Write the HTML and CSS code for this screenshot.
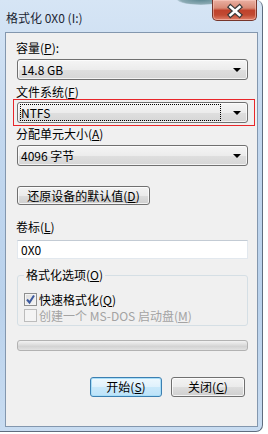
FILE: index.html
```html
<!DOCTYPE html>
<html lang="zh-CN">
<head>
    <meta charset="UTF-8">
    <title>格式化 0X0 (I:)</title>
    <link rel="stylesheet" href="styles.css">
</head>
<body>
    <div class="window">
        <div class="titlebar">
            <span class="title">格式化 0X0 (I:)</span>
            <div class="close-btn">
                <svg width="45" height="21" viewBox="0 0 45 21">
                    <path d="M18.5 7 L27.5 15 M27.5 7 L18.5 15" stroke="#3a3a3a" stroke-width="5" stroke-linecap="square" fill="none"/>
                    <path d="M18.5 7 L27.5 15 M27.5 7 L18.5 15" stroke="#ffffff" stroke-width="2.6" stroke-linecap="square" fill="none"/>
                </svg>
            </div>
        </div>
        <div class="client">
            <div class="label">容量(<u>P</u>):</div>
            <div class="combo">
                <span class="combo-text">14.8 GB</span>
                <span class="arrow"></span>
            </div>

            <div class="label">文件系统(<u>F</u>)</div>
            <div class="highlight">
                <div class="combo">
                    <span class="focus-box">NTFS</span>
                    <span class="arrow"></span>
                </div>
            </div>

            <div class="label label-tight">分配单元大小(<u>A</u>)</div>
            <div class="combo">
                <span class="combo-text">4096 字节</span>
                <span class="arrow"></span>
            </div>

            <div class="btn btn-reset">还原设备的默认值(<u>D</u>)</div>

            <div class="label label-volume">卷标(<u>L</u>)</div>
            <div class="textbox">0X0</div>

            <fieldset class="options">
                <legend>格式化选项(<u>O</u>)</legend>
                <div class="option">
                    <span class="checkbox checked">
                        <svg width="11" height="11" viewBox="0 0 11 11">
                            <path d="M2 5.5 L4.5 8.5 L9 1.5" stroke="#3d5a9e" stroke-width="2" fill="none"/>
                        </svg>
                    </span>
                    <span>快速格式化(<u>Q</u>)</span>
                </div>
                <div class="option disabled">
                    <span class="checkbox"></span>
                    <span>创建一个 MS-DOS 启动盘(<u>M</u>)</span>
                </div>
            </fieldset>

            <div class="progress"></div>

            <div class="actions">
                <div class="btn btn-default">开始(<u>S</u>)</div>
                <div class="btn btn-close">关闭(<u>C</u>)</div>
            </div>
        </div>
    </div>
</body>
</html>
```

FILE: styles.css
```css
body {
    margin: 0;
    background: #ffffff;
    font-family: "Noto Sans CJK SC", "Liberation Sans", sans-serif;
    font-size: 12px;
    color: #000000;
}
u {
    text-decoration-thickness: 1px;
    text-underline-offset: 1px;
}
.window {
    width: 263px;
    height: 432px;
    box-sizing: border-box;
    padding: 0 4px 4px 5px;
    background: linear-gradient(#d6e5f5, #c3d8ef 30%, #bad2ec 70%, #c8dcf1);
    border-right: 1px solid #5f6d7f;
    border-bottom: 1px solid #5f6d7f;
    border-radius: 0 7px 7px 0;
    display: flex;
    flex-direction: column;
}
.titlebar {
    position: relative;
    height: 32px;
    flex-shrink: 0;
    display: flex;
    justify-content: space-between;
    align-items: flex-start;
}
.titlebar::before {
    content: "";
    position: absolute;
    left: 172px;
    top: -6px;
    width: 48px;
    height: 11px;
    border-radius: 50%;
    background: radial-gradient(#3c6f78, #7a9ca4 60%, rgba(200, 220, 240, 0) 75%);
    opacity: 0.8;
}
.title {
    margin-top: 11px;
    padding-left: 1px;
    line-height: 14px;
    color: #1c2633;
}
.close-btn {
    position: relative;
    width: 45px;
    height: 21px;
    margin-right: 1px;
    box-sizing: border-box;
    border: 1px solid #76362c;
    border-top: none;
    border-radius: 0 0 5px 5px;
    background: linear-gradient(#eab0a2, #d88a76 40%, #c0422c 52%, #c14a32 75%, #e0806a);
    box-shadow: inset 0 0 0 1px rgba(255, 210, 200, 0.5);
    display: flex;
    align-items: center;
    justify-content: center;
}
.close-btn svg {
    position: absolute;
    left: -1px;
    top: 0;
}
.client {
    flex: 1;
    background: #f0f0f0;
    border: 1px solid #8397ae;
    padding: 9px 9px 0 11px;
    display: flex;
    flex-direction: column;
    align-items: flex-start;
}
.label {
    line-height: 12px;
    margin-left: -1px;
    margin-top: 6px;
    white-space: nowrap;
}
.label:first-child {
    margin-top: 0;
}
.label-tight {
    margin-top: 2px;
}
.label-volume {
    margin-top: 16px;
}
.combo {
    width: 231px;
    height: 21px;
    margin-top: 5px;
    box-sizing: border-box;
    border: 1px solid #707070;
    border-radius: 3px;
    background: linear-gradient(#f5f5f5, #ececec 50%, #dfdfdf 51%, #d6d6d6);
    box-shadow: inset 0 0 0 1px rgba(255, 255, 255, 0.7);
    display: flex;
    align-items: center;
}
.combo-text {
    flex: 1;
    padding-left: 3px;
    line-height: 14px;
}
.arrow {
    width: 0;
    height: 0;
    margin: 1px 6px 0 6px;
    border-left: 4px solid transparent;
    border-right: 4px solid transparent;
    border-top: 4px solid #000000;
}
.highlight {
    margin: 1px -7px 0 -4px;
    padding: 2px 6px 2px 3px;
    border: 1px solid #e8262a;
}
.highlight .combo {
    margin-top: 0;
}
.focus-box {
    flex: 1;
    margin: 0 6px 0 2px;
    padding-left: 0;
    height: 15px;
    line-height: 15px;
    border: 1px dotted #000000;
}
.btn {
    height: 20px;
    box-sizing: border-box;
    border: 1px solid #707070;
    border-radius: 3px;
    background: linear-gradient(#f3f3f3, #ebebeb 50%, #dddddd 51%, #cfcfcf);
    box-shadow: inset 0 0 0 1px rgba(255, 255, 255, 0.75);
    display: flex;
    align-items: center;
    justify-content: center;
    line-height: 14px;
    white-space: nowrap;
}
.btn-reset {
    width: 133px;
    height: 19px;
    margin-top: 20px;
}
.textbox {
    width: 231px;
    height: 19px;
    margin-top: 7px;
    box-sizing: border-box;
    background: #ffffff;
    border: 1px solid #e2e8ee;
    border-top-color: #c3cbd4;
    padding-left: 3px;
    line-height: 17px;
}
.options {
    width: 231px;
    box-sizing: border-box;
    margin: 10px 0 0 0;
    padding: 0 6px 2px 6px;
    border: 1px solid #d5dfe5;
    border-radius: 3px;
    min-width: 0;
}
.options legend {
    padding: 0 2px;
    line-height: 12px;
}
.option {
    height: 16px;
    display: flex;
    align-items: center;
    white-space: nowrap;
}
.option:first-of-type {
    margin-top: 10px;
}
.checkbox {
    width: 13px;
    height: 13px;
    margin-right: 2px;
    box-sizing: border-box;
    border: 1px solid #8e8f8f;
    background: linear-gradient(135deg, #dcdcdc, #f6f6f6);
    box-shadow: inset 0 0 0 1px #f4f4f4;
    display: flex;
    align-items: center;
    justify-content: center;
}
.disabled {
    color: #a3a3a3;
}
.disabled .checkbox {
    border-color: #bcbcbc;
    background: #f4f4f4;
    box-shadow: none;
}
.progress {
    width: 231px;
    height: 11px;
    margin-top: 14px;
    box-sizing: border-box;
    border: 1px solid #b2b2b2;
    border-radius: 3px;
    background: linear-gradient(#f2f2f2, #dcdcdc 45%, #d3d3d3 60%, #e2e2e2);
}
.actions {
    width: 228px;
    margin-top: 26px;
    display: flex;
    justify-content: flex-end;
    gap: 9px;
}
.btn-default {
    width: 72px;
    border-color: #3c7fb1;
    background: linear-gradient(#eef8fe, #dff1fc 50%, #c9e8fa 51%, #bde3f9);
    box-shadow: inset 0 0 0 1px #a8def8;
}
.btn-close {
    width: 74px;
}
```
